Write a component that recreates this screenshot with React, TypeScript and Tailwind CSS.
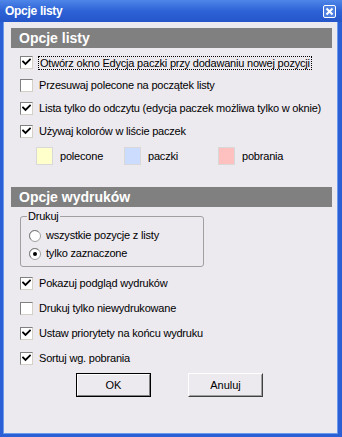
import React from "react";

const font = { fontFamily: '"Liberation Sans", Arial, sans-serif' };

function Check({ checked }: { checked: boolean }) {
  return (
    <div className="w-[13px] h-[13px] shrink-0 bg-white border border-t-[#808080] border-l-[#808080] border-b-[#d4d0c8] border-r-[#d4d0c8] flex items-center justify-center">
      {checked && (
        <svg width="9" height="9" viewBox="0 0 9 9">
          <path d="M1 3.5 L3.5 6 L8 1.5" stroke="#000" strokeWidth="1.8" fill="none" strokeLinecap="square" />
        </svg>
      )}
    </div>
  );
}

function Radio({ checked }: { checked: boolean }) {
  return (
    <svg width="12" height="12" viewBox="0 0 12 12" className="shrink-0">
      <circle cx="6" cy="6" r="5.5" fill="#fff" stroke="#a0a0a0" />
      <path d="M2 9.5 A5 5 0 0 1 9.5 2" stroke="#808080" fill="none" />
      {checked && <circle cx="6" cy="6" r="2" fill="#000" />}
    </svg>
  );
}

function CheckRow({ checked, label, focus }: { checked: boolean; label: string; focus?: boolean }) {
  return (
    <div className="flex items-center h-[13px] pl-[19px] whitespace-nowrap">
      <Check checked={checked} />
      <span
        className={
          focus
            ? "ml-[5px] px-[1px] leading-[12px] border border-dotted border-black text-[11px] tracking-[-0.2px]"
            : "ml-[6px] leading-[13px] text-[11px] tracking-[-0.2px]"
        }
      >
        {label}
      </span>
    </div>
  );
}

export default function App() {
  return (
    <div className="w-[342px] h-[437px] flex flex-col bg-[#2a5fd6]" style={font}>
      <div className="h-[22px] shrink-0 flex items-center justify-between pl-[5px] pr-[6px] bg-gradient-to-b from-[#4f86e8] via-[#2d62d6] to-[#2556c9]">
        <span className="text-white font-bold text-[12px] tracking-[-0.3px]">Opcje listy</span>
        <div className="w-[13px] h-[13px] border border-white rounded-[2px] bg-[#4f7fe0] flex items-center justify-center">
          <svg width="9" height="9" viewBox="0 0 9 9">
            <path d="M1.5 1.5 L7.5 7.5 M7.5 1.5 L1.5 7.5" stroke="#fff" strokeWidth="2" />
          </svg>
        </div>
      </div>
      <div className="flex-1 mx-[3px] mr-[4px] mb-[3px] bg-[#ece9ef] text-black flex flex-col border-l border-r border-b border-[#6b9aea]">
        <div className="mt-[6px] mx-[7px] mr-[5px] h-[20px] bg-[#808080] flex items-center pl-[8px]">
          <span className="text-white font-bold text-[14px]">Opcje listy</span>
        </div>
        <div className="flex flex-col gap-[10px] mt-[8px] -ml-[3px]">
          <CheckRow checked label="Otwórz okno Edycja paczki przy dodawaniu nowej pozycji" focus />
          <CheckRow checked={false} label="Przesuwaj polecone na początek listy" />
          <CheckRow checked label="Lista tylko do odczytu (edycja paczek możliwa tylko w oknie)" />
          <CheckRow checked label="Używaj kolorów w liście paczek" />
        </div>
        <div className="flex items-center mt-[9px] ml-[32px] text-[11px] tracking-[-0.2px]">
          <div className="w-[17px] h-[18px] bg-[#ffffcc] border border-[#d8d8d8]" />
          <span className="ml-[7px] w-[64px]">polecone</span>
          <div className="w-[17px] h-[18px] bg-[#ccdcff] border border-[#d8d8d8]" />
          <span className="ml-[7px] w-[70px]">paczki</span>
          <div className="w-[17px] h-[18px] bg-[#ffc0c0] border border-[#d8d8d8]" />
          <span className="ml-[7px]">pobrania</span>
        </div>
        <div className="mt-[22px] mx-[7px] mr-[5px] h-[20px] bg-[#808080] flex items-center pl-[8px]">
          <span className="text-white font-bold text-[14px]">Opcje wydruków</span>
        </div>
        <div className="relative mt-[9px] ml-[16px] w-[184px] h-[51px] border border-[#a0a0a0] rounded-[3px] text-[11px] tracking-[-0.2px]">
          <span className="absolute -top-[8px] left-[6px] bg-[#ece9ef] px-[1px] leading-[14px]">Drukuj</span>
          <div className="flex flex-col gap-[7px] mt-[13px] ml-[8px]">
            <div className="flex items-center gap-[5px] h-[11px]">
              <Radio checked={false} />
              <span>wszystkie pozycje z listy</span>
            </div>
            <div className="flex items-center gap-[5px] h-[11px]">
              <Radio checked />
              <span>tylko zaznaczone</span>
            </div>
          </div>
        </div>
        <div className="flex flex-col gap-[12px] mt-[10px] -ml-[3px]">
          <CheckRow checked label="Pokazuj podgląd wydruków" />
          <CheckRow checked={false} label="Drukuj tylko niewydrukowane" />
          <CheckRow checked label="Ustaw priorytety na końcu wydruku" />
          <CheckRow checked label="Sortuj wg. pobrania" />
        </div>
        <div className="flex mt-[8px] ml-[72px] gap-[37px] text-[11px]">
          <div className="w-[75px] h-[24px] border border-black">
            <div className="w-full h-full border border-t-white border-l-white border-b-[#808080] border-r-[#808080] flex items-center justify-center">
              OK
            </div>
          </div>
          <div className="w-[75px] h-[24px] border border-t-white border-l-white border-b-[#404040] border-r-[#404040]">
            <div className="w-full h-full border border-t-[#ece9ef] border-l-[#ece9ef] border-b-[#a0a0a0] border-r-[#a0a0a0] flex items-center justify-center">
              Anuluj
            </div>
          </div>
        </div>
      </div>
    </div>
  );
}
